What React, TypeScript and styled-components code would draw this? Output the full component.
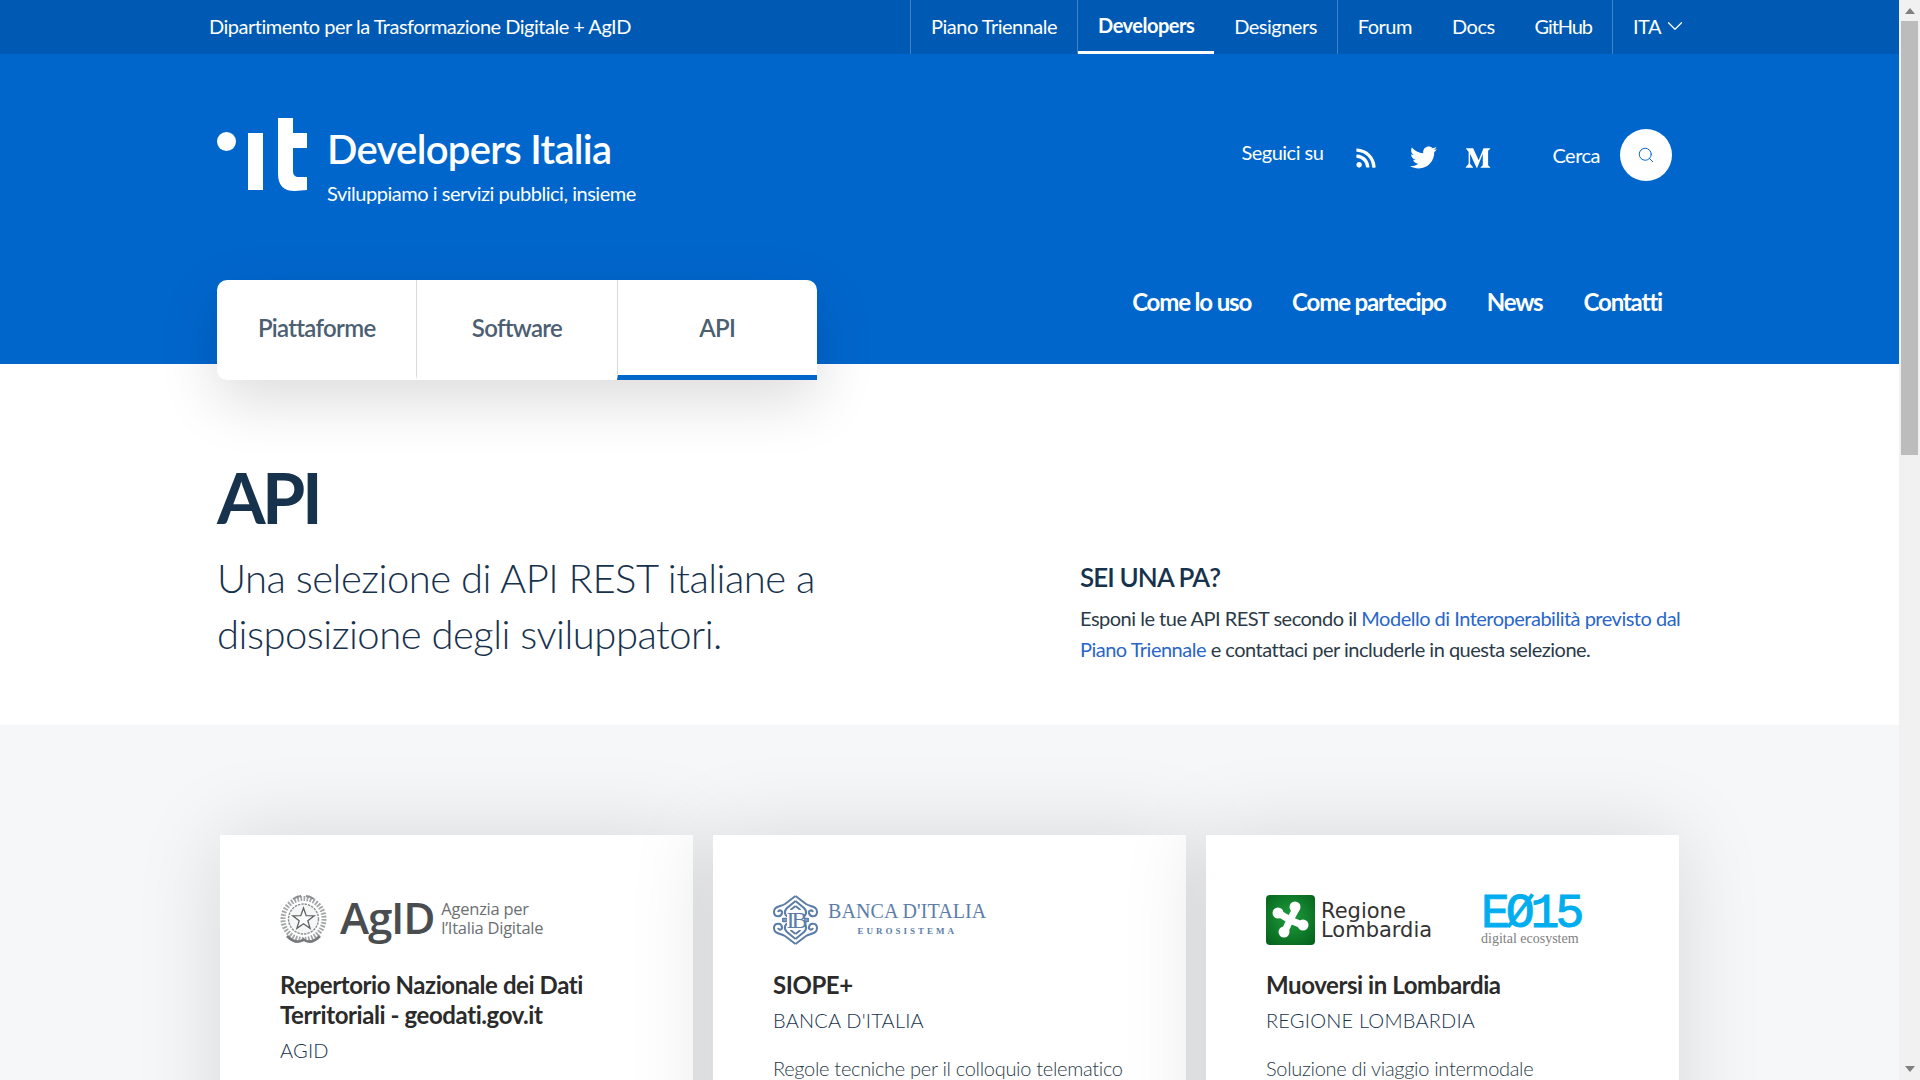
import React from 'react';
import styled, { createGlobalStyle } from 'styled-components';
import { FaRss, FaTwitter, FaMediumM } from 'react-icons/fa';
import { Search, ChevronDown } from 'lucide-react';

const FONT = `Lato, "Open Sans", "Liberation Sans", sans-serif`;

const GlobalStyle = createGlobalStyle`
  html, body {
    margin: 0;
    height: 100%;
    overflow: hidden;
  }
  body {
    font-family: ${FONT};
    color: #17324d;
    background: #fff;
  }
  * { box-sizing: border-box; }
`;

const App = () => {
  return (
    <>
      <GlobalStyle />
      <Screen>
        <Page>
          <SlimHeader>
            <SlimOwner>Dipartimento per la Trasformazione Digitale + AgID</SlimOwner>
            <SlimNav>
              <SlimGroup>
                <SlimLink>Piano Triennale</SlimLink>
              </SlimGroup>
              <SlimGroup>
                <SlimLink $active>Developers</SlimLink>
                <SlimLink>Designers</SlimLink>
              </SlimGroup>
              <SlimGroup>
                <SlimLink>Forum</SlimLink>
                <SlimLink>Docs</SlimLink>
                <SlimLink $tight>GitHub</SlimLink>
              </SlimGroup>
              <SlimGroup>
                <LangLink>
                  ITA
                  <ChevronDown size={26} strokeWidth={1.1} />
                </LangLink>
              </SlimGroup>
            </SlimNav>
          </SlimHeader>

          <Hero>
            <BrandRow>
              <Brand>
                <ItLogo />
                <BrandText>
                  <BrandTitle>Developers Italia</BrandTitle>
                  <BrandTag>Sviluppiamo i servizi pubblici, insieme</BrandTag>
                </BrandText>
              </Brand>
              <HeroTools>
                <FollowLabel>Seguici su</FollowLabel>
                <Socials>
                  <FaRss size={22} />
                  <FaTwitter size={27} />
                  <FaMediumM size={26} />
                </Socials>
                <SearchLabel>Cerca</SearchLabel>
                <SearchButton>
                  <Search size={18} strokeWidth={1.3} />
                </SearchButton>
              </HeroTools>
            </BrandRow>
            <NavRow>
              <Tabs>
                <Tab>Piattaforme</Tab>
                <Tab>Software</Tab>
                <Tab $active>API</Tab>
              </Tabs>
              <MainNav>
                <MainLink>Come lo uso</MainLink>
                <MainLink>Come partecipo</MainLink>
                <MainLink>News</MainLink>
                <MainLink>Contatti</MainLink>
              </MainNav>
            </NavRow>
          </Hero>

          <Intro>
            <div>
              <PageTitle>API</PageTitle>
              <Lead>Una selezione di API REST italiane a disposizione degli sviluppatori.</Lead>
            </div>
            <IntroRight>
              <AsideTitle>SEI UNA PA?</AsideTitle>
              <AsideText>
                Esponi le tue API REST secondo il{' '}
                <AsideLink>Modello di Interoperabilità previsto dal Piano Triennale</AsideLink>{' '}
                e contattaci per includerle in questa selezione.
              </AsideText>
            </IntroRight>
          </Intro>

          <CardsSection>
            <Card>
              <CardLogo>
                <AgidEmblem />
                <AgidName>AgID</AgidName>
                <AgidClaim>
                  Agenzia per
                  <br />
                  l’Italia Digitale
                </AgidClaim>
              </CardLogo>
              <CardTitle>Repertorio Nazionale dei Dati Territoriali - geodati.gov.it</CardTitle>
              <CardOwner>AGID</CardOwner>
            </Card>
            <Card>
              <CardLogo>
                <BancaEmblem />
                <BancaText>
                  <BancaName>BANCA D'ITALIA</BancaName>
                  <BancaSub>EUROSISTEMA</BancaSub>
                </BancaText>
              </CardLogo>
              <CardTitle>SIOPE+</CardTitle>
              <CardOwner>BANCA D'ITALIA</CardOwner>
              <CardBody>Regole tecniche per il colloquio telematico</CardBody>
            </Card>
            <Card>
              <CardLogo>
                <LombardiaMark />
                <LombardiaName>
                  Regione
                  <br />
                  Lombardia
                </LombardiaName>
                <EoBlock>
                  <EoName>EØ15</EoName>
                  <EoSub>digital ecosystem</EoSub>
                </EoBlock>
              </CardLogo>
              <CardTitle>Muoversi in Lombardia</CardTitle>
              <CardOwner>REGIONE LOMBARDIA</CardOwner>
              <CardBody>Soluzione di viaggio intermodale</CardBody>
            </Card>
          </CardsSection>
        </Page>
        <ScrollBar>
          <ScrollArrow viewBox="0 0 10 6">
            <path d="M5 0l5 6H0z" />
          </ScrollArrow>
          <ScrollTrack>
            <ScrollThumb />
          </ScrollTrack>
          <ScrollArrow viewBox="0 0 10 6">
            <path d="M0 0h10L5 6z" />
          </ScrollArrow>
        </ScrollBar>
      </Screen>
    </>
  );
};

export default App;

const LogoSvg = styled.svg`
  flex: none;
`;

const ItLogo = () => (
  <LogoSvg width="90" height="73" viewBox="0 0 90 73" fill="#fff">
    <circle cx="9.5" cy="23.5" r="9.5" />
    <rect x="31" y="15" width="15" height="57" />
    <path d="M61 0h15v15h14v15H76v23c0 4 2 6 6 6h8v13l-12 1c-12 0-17-6-17-18z" />
  </LogoSvg>
);

const AgidEmblem = () => (
  <LogoSvg width="47" height="50" viewBox="0 0 47 50">
    <circle cx="23.5" cy="24" r="20.5" fill="none" stroke="#a3a6a8" strokeWidth="5" strokeDasharray="1.8 1.4" />
    <circle cx="23.5" cy="24" r="15" fill="#f6f6f6" stroke="#8b8e90" strokeWidth="1.4" strokeDasharray="2.4 1" />
    <path
      d="M23.5 13l2.7 7.6 8 .2-6.4 4.9 2.3 7.7-6.6-4.6-6.6 4.6 2.3-7.7-6.4-4.9 8-.2z"
      fill="#fff"
      stroke="#5f6264"
      strokeWidth="1.3"
    />
    <path d="M7 41c6 6 12 7 16.5 3.5C28 48 34 47 40 41" fill="none" stroke="#77797b" strokeWidth="2.6" />
    <path d="M13 4c3-2 5-3 8-3M34 4c-3-2-5-3-8-3" fill="none" stroke="#8b8e90" strokeWidth="2" />
  </LogoSvg>
);

const BANCA_QUARTER =
  'M22.5 1L33 9c5 3 11 2 11 8 0 5-7 6-8 1-.5-3 3-3.5 4-1M22.5 6L31 13c4 4 2 9-3 9H22.5M22.5 11l5 4M36 24c-3 0-5-1-8 1';

const BancaEmblem = () => (
  <LogoSvg width="45" height="50" viewBox="0 0 45 50" fill="none" stroke="#5a7ca8" strokeWidth="2">
    <path d={BANCA_QUARTER} />
    <path d={BANCA_QUARTER} transform="matrix(-1 0 0 1 45 0)" />
    <path d={BANCA_QUARTER} transform="matrix(1 0 0 -1 0 50)" />
    <path d={BANCA_QUARTER} transform="matrix(-1 0 0 -1 45 50)" />
    <rect x="14" y="15" width="17" height="20" fill="#fff" stroke="none" />
    <text
      x="22.5"
      y="33"
      textAnchor="middle"
      fontFamily="'Liberation Serif', serif"
      fontSize="24"
      letterSpacing="-3"
      fill="#5a7ca8"
      stroke="none"
    >
      IB
    </text>
  </LogoSvg>
);

const LombardiaMark = () => (
  <LogoSvg width="49" height="50" viewBox="0 0 49 50">
    <defs>
      <radialGradient id="lombardia" cx="0.5" cy="0.45" r="0.7">
        <stop offset="0" stopColor="#1f9e3c" />
        <stop offset="1" stopColor="#05621c" />
      </radialGradient>
    </defs>
    <rect width="49" height="50" rx="4" fill="url(#lombardia)" />
    <g stroke="#fff" strokeWidth="7" strokeLinecap="round">
      <path d="M24 25L30 14M24 25L14 19M24 25L19 36M24 25L36 30" />
    </g>
    <g fill="#fff">
      <circle cx="29" cy="12" r="5.5" />
      <circle cx="12" cy="18" r="5.5" />
      <circle cx="18" cy="37" r="5.5" />
      <circle cx="37" cy="30" r="5.5" />
    </g>
  </LogoSvg>
);

const Screen = styled.div`
  display: flex;
  width: 100vw;
  height: 100vh;
  overflow: hidden;
`;

const Page = styled.div`
  flex: 1;
  min-width: 0;
  height: 100%;
  overflow: hidden;
`;

const ScrollBar = styled.div`
  width: 21px;
  flex: none;
  background: #f1f1f1;
  display: flex;
  flex-direction: column;
  align-items: center;
  padding-top: 8px;
  padding-bottom: 8px;
`;

const ScrollArrow = styled.svg`
  width: 10px;
  height: 6px;
  fill: #7f7f7f;
  flex: none;
`;

const ScrollTrack = styled.div`
  flex: 1;
  width: 100%;
  padding: 7px 2px 0 2px;
`;

const ScrollThumb = styled.div`
  height: 434px;
  background: #bcbcbc;
`;

const SlimHeader = styled.div`
  height: 54px;
  background: #0059b3;
  display: flex;
  justify-content: space-between;
  padding-left: 209px;
  padding-right: 217px;
  color: #fff;
  font-size: 20px;
  letter-spacing: -0.5px;
`;

const SlimOwner = styled.div`
  line-height: 52px;
`;

const SlimNav = styled.nav`
  display: flex;
`;

const SlimGroup = styled.div`
  display: flex;
  border-left: 1px solid rgba(255, 255, 255, 0.25);
`;

const SlimLink = styled.a<{ $active?: boolean; $tight?: boolean }>`
  padding: 0 20px;
  line-height: ${(p) => (p.$active ? '50px' : '52px')};
  height: 54px;
  font-weight: ${(p) => (p.$active ? 700 : 400)};
  letter-spacing: ${(p) => (p.$tight ? '-1.1px' : '-0.5px')};
  border-bottom: 3px solid ${(p) => (p.$active ? '#fff' : 'transparent')};
`;

const LangLink = styled.a`
  display: flex;
  align-items: center;
  padding: 0 0 3px 20px;
  height: 54px;

  svg {
    margin: 0 -6px 0 1px;
  }
`;

const Hero = styled.header`
  height: 310px;
  background: #0066cc;
  color: #fff;
  padding: 64px 217px 0;
`;

const BrandRow = styled.div`
  display: flex;
  justify-content: space-between;
  align-items: flex-start;
  height: 162px;
`;

const Brand = styled.div`
  display: flex;
  align-items: flex-start;
  gap: 20px;
`;

const BrandText = styled.div`
  padding-top: 6px;
`;

const BrandTitle = styled.div`
  font-size: 40px;
  line-height: 50px;
  font-weight: 600;
  letter-spacing: -0.7px;
`;

const BrandTag = styled.div`
  font-size: 20px;
  line-height: 26px;
  margin-top: 6px;
  letter-spacing: -0.47px;
`;

const HeroTools = styled.div`
  display: flex;
  align-items: center;
  padding-top: 11px;
  padding-right: 10px;
`;

const FollowLabel = styled.span`
  font-size: 20px;
  letter-spacing: -0.5px;
  margin-top: -7px;
`;

const Socials = styled.div`
  display: flex;
  align-items: center;
  gap: 28px;
  margin-left: 32px;
  margin-top: 5px;

  svg:first-child {
    margin-right: 5px;
  }
`;

const SearchLabel = styled.span`
  font-size: 20px;
  letter-spacing: -0.5px;
  margin-left: 61px;
`;

const SearchButton = styled.div`
  width: 52px;
  height: 52px;
  border-radius: 50%;
  background: #fff;
  color: #0066cc;
  display: flex;
  align-items: center;
  justify-content: center;
  margin-left: 20px;
`;

const NavRow = styled.div`
  display: flex;
  justify-content: space-between;
  align-items: flex-start;
`;

const Tabs = styled.div`
  display: flex;
  width: 600px;
  height: 100px;
  background: #fff;
  border-radius: 10px 10px 0 10px;
  overflow: hidden;
  box-shadow: 0 20px 60px rgba(0, 0, 0, 0.14);
  position: relative;
`;

const Tab = styled.a<{ $active?: boolean }>`
  flex: 1;
  display: flex;
  align-items: center;
  justify-content: center;
  font-size: 24px;
  font-weight: 600;
  letter-spacing: -0.7px;
  color: #4c5f72;
  border-left: 1px solid #d9dadb;
  border-bottom: 5px solid ${(p) => (p.$active ? '#0066cc' : 'transparent')};

  &:first-child {
    border-left: 0;
  }
`;

const MainNav = styled.nav`
  display: flex;
  gap: 41px;
  padding-right: 20px;
`;

const MainLink = styled.a`
  font-size: 24px;
  line-height: 44px;
  font-weight: 700;
  letter-spacing: -1.15px;
`;

const Intro = styled.section`
  height: 361px;
  display: grid;
  grid-template-columns: 863px 620px;
  padding: 95px 0 0 217px;
`;

const PageTitle = styled.h1`
  margin: 0;
  font-size: 70px;
  line-height: 76px;
  font-weight: 700;
  letter-spacing: -3.5px;
  color: #17324d;
`;

const Lead = styled.p`
  margin: 15px 0 0;
  font-size: 40px;
  line-height: 56px;
  font-weight: 300;
  letter-spacing: -0.5px;
  color: #17324d;
  width: 640px;
`;

const IntroRight = styled.div`
  padding-top: 100px;
`;

const AsideTitle = styled.h3`
  margin: 0;
  font-size: 26px;
  line-height: 36px;
  font-weight: 600;
  letter-spacing: -0.9px;
  color: #17324d;
`;

const AsideText = styled.p`
  margin: 8px 0 0;
  font-size: 20px;
  line-height: 31px;
  letter-spacing: -0.5px;
  color: #2b3a48;
`;

const AsideLink = styled.a`
  color: #2a66c9;
`;

const CardsSection = styled.section`
  background: #f6f7f9;
  padding: 110px 220px 0;
  display: grid;
  grid-template-columns: repeat(3, 473px);
  column-gap: 20px;
  height: 800px;
`;

const Card = styled.article`
  background: #fff;
  padding: 60px;
  height: 600px;
  box-shadow: 0 0 80px rgba(0, 0, 0, 0.13);
`;

const CardLogo = styled.div`
  display: flex;
  align-items: center;
  height: 50px;
`;

const CardTitle = styled.h4`
  margin: 25px 0 0;
  font-size: 24px;
  line-height: 30px;
  font-weight: 700;
  letter-spacing: -0.42px;
  color: #2b2b2b;
`;

const CardOwner = styled.div`
  margin-top: 6px;
  font-size: 20px;
  line-height: 28px;
  letter-spacing: 0.2px;
  font-weight: 300;
  color: #17324d;
`;

const CardBody = styled.p`
  margin: 19px 0 0;
  font-size: 20px;
  line-height: 30px;
  font-weight: 300;
  letter-spacing: -0.3px;
  color: #2b3a48;
`;

const AgidName = styled.span`
  font-family: "Open Sans", sans-serif;
  font-size: 44px;
  line-height: 44px;
  font-weight: 600;
  color: #4a4d50;
  margin: -7px 0 0 13px;
  letter-spacing: -1.2px;
`;

const AgidClaim = styled.span`
  font-family: "Open Sans", sans-serif;
  font-size: 16.5px;
  line-height: 19px;
  color: #6b6f72;
  margin: -4px 0 0 7px;
  letter-spacing: -0.25px;
  white-space: nowrap;
`;

const BancaText = styled.div`
  margin: -2px 0 0 10px;
  text-align: center;
  font-family: "Liberation Serif", serif;
  color: #5d7ea8;
`;

const BancaName = styled.div`
  font-size: 20px;
  line-height: 22px;
  letter-spacing: 0.1px;
  white-space: nowrap;
`;

const BancaSub = styled.div`
  font-size: 9px;
  line-height: 14px;
  font-weight: 700;
  letter-spacing: 3px;
  margin-top: 2px;
`;

const LombardiaName = styled.span`
  font-family: "DejaVu Sans", sans-serif;
  font-size: 21px;
  line-height: 19px;
  color: #333;
  margin: 2px 0 0 6px;
  width: 160px;
  flex: none;
`;

const EoBlock = styled.div`
  display: flex;
  flex-direction: column;
  align-items: flex-start;
  padding-top: 2px;
`;

const EoName = styled.span`
  font-family: "Liberation Mono", monospace;
  font-size: 48px;
  line-height: 35px;
  font-weight: 400;
  letter-spacing: -4px;
  -webkit-text-stroke: 1px #00aeef;
  color: #00aeef;
`;

const EoSub = styled.span`
  font-family: "Liberation Serif", serif;
  font-size: 14px;
  line-height: 13px;
  color: #808080;
  white-space: nowrap;
`;
